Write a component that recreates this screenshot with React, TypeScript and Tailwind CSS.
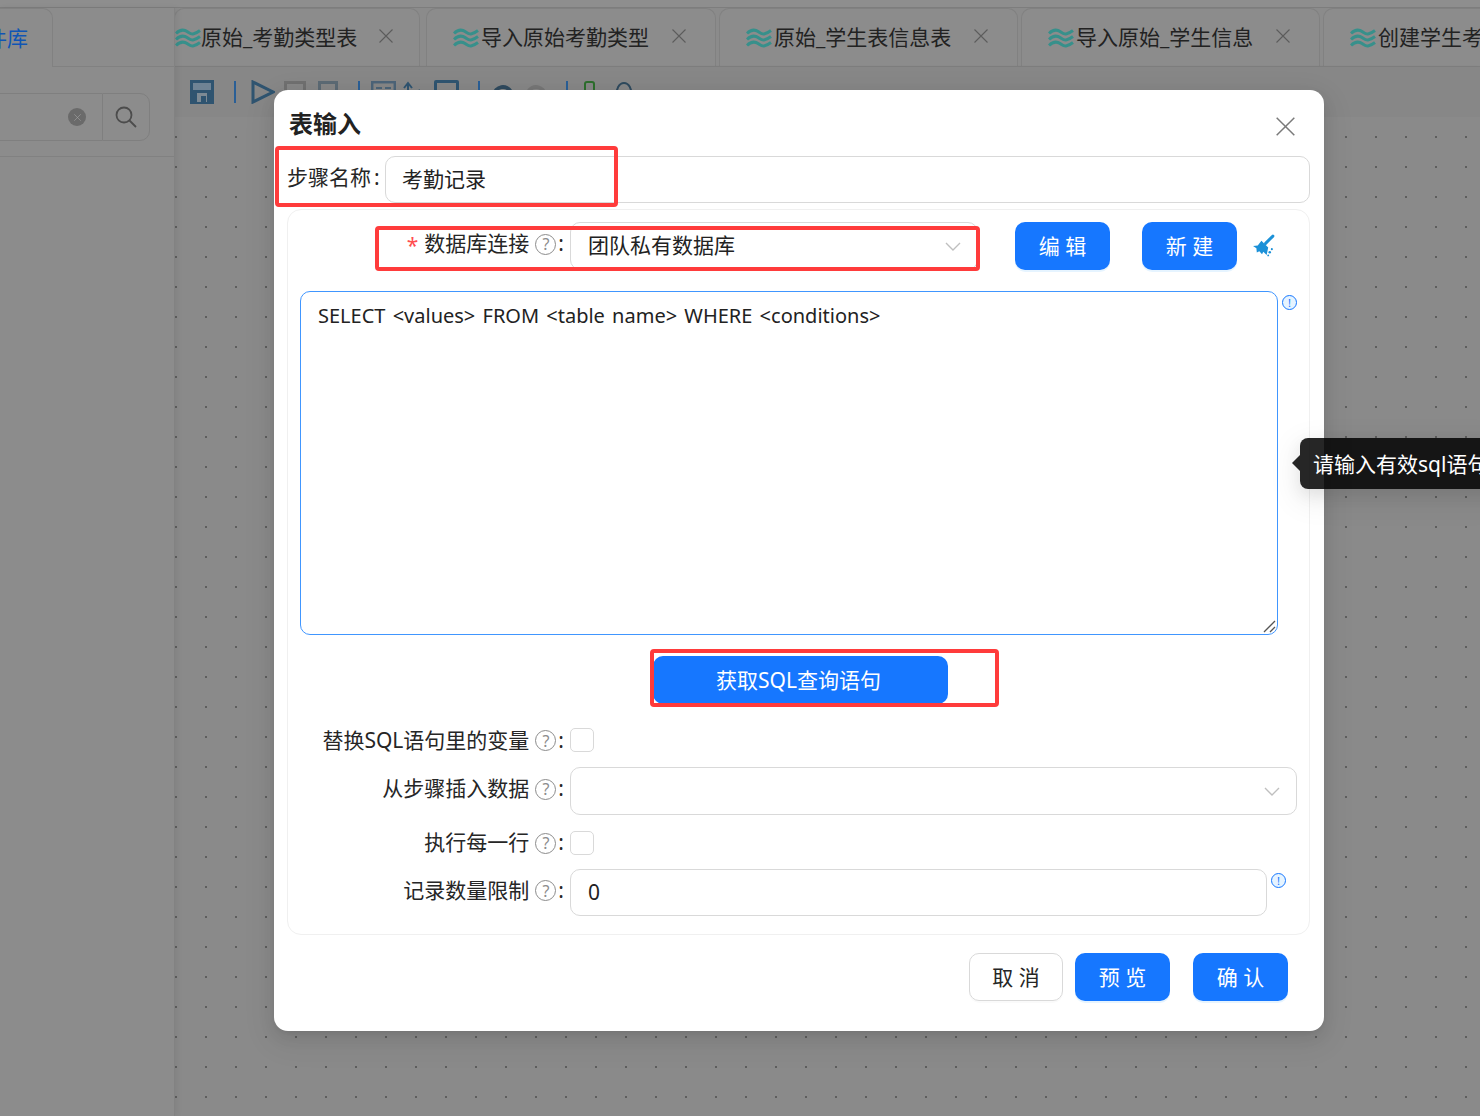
import React from "react";

const Wave = () => (
  <svg width="26" height="20" viewBox="0 0 26 20" fill="none" stroke="#37908b" strokeWidth="3" className="shrink-0">
    <path d="M1 5.5C4 2.5 7 1.5 10 2.5s5 4 8 3.5 5-2 7-3.5" />
    <path d="M1 11.5C4 8.5 7 7.5 10 8.5s5 4 8 3.5 5-2 7-3.5" />
    <path d="M1 17.5C4 14.5 7 13.5 10 14.5s5 4 8 3.5 5-2 7-3.5" />
  </svg>
);

const Cross = ({ size = 14, color = "#5c5c5c" }: { size?: number; color?: string }) => (
  <svg width={size} height={size} viewBox="0 0 14 14" stroke={color} strokeWidth="1.1" fill="none" className="shrink-0">
    <path d="M0.5 0.5 13.5 13.5M13.5 0.5 0.5 13.5" />
  </svg>
);

const Broom = () => (
  <svg width="23" height="23" viewBox="0 0 22 22" fill="#1c91d8" className="ml-[15px] mt-[-2px] shrink-0">
    <path d="M20 2 13 9" stroke="#1c91d8" strokeWidth="2.8" strokeLinecap="round" fill="none" />
    <path d="M9 6.5 15.5 13l-1.5 7-3.2-3-1.2 2.4-2.6-2.8-2.4 1-.4-4L1 11.5l4.5-.4Z" />
    <circle cx="17" cy="17.5" r="1.2" />
    <circle cx="19" cy="14.5" r="1" />
    <circle cx="15.5" cy="20.5" r="0.9" />
  </svg>
);

const Help = () => (
  <span className="ml-[6px] mr-[2px] flex h-[21px] w-[21px] shrink-0 items-center justify-center rounded-full border-[1.5px] border-[#8c8c8c] text-[16px] leading-none text-[#8c8c8c]">?</span>
);

const Info = () => (
  <span className="flex h-[15px] w-[15px] shrink-0 items-center justify-center rounded-full border border-[#1677ff] bg-[#e6f4ff] text-[11px] leading-none text-[#1677ff]">!</span>
);

const Chevron = () => (
  <svg width="16" height="9" viewBox="0 0 16 9" fill="none" stroke="#bfbfbf" strokeWidth="1.4" className="shrink-0">
    <path d="M1 1l7 7 7-7" />
  </svg>
);

const Label = ({ text, required, className = "" }: { text: string; required?: boolean; className?: string }) => (
  <div className={`flex w-[277px] shrink-0 items-center justify-end text-[21px] text-[#262626] ${className}`}>
    {required && <span className="mr-[6px] mt-[2px] text-[21px] leading-none text-[#ff4d4f]">*</span>}
    <span>{text}</span>
    <Help />
    <span className="mr-[1px]">:</span>
  </div>
);

const Primary = ({ children, className = "" }: { children: React.ReactNode; className?: string }) => (
  <div className={`flex h-[48px] w-[95px] shrink-0 items-center justify-center rounded-[10px] bg-[#1677ff] text-[21px] text-white shadow-[0_2px_0_rgba(5,145,255,0.1)] ${className}`}>
    {children}
  </div>
);

const tabs = [
  { text: "原始_考勤类型表", w: "w-[246px]", ml: "ml-[-1px]", pl: "pl-0", tl: "ml-0", gap: "ml-[22px]" },
  { text: "导入原始考勤类型", w: "w-[290px]", ml: "ml-[6px]", pl: "pl-[26px]", tl: "ml-[2px]", gap: "ml-[23px]" },
  { text: "原始_学生表信息表", w: "w-[299px]", ml: "ml-[3px]", pl: "pl-[26px]", tl: "ml-[2px]", gap: "ml-[23px]" },
  { text: "导入原始_学生信息", w: "w-[299px]", ml: "ml-[3px]", pl: "pl-[26px]", tl: "ml-[2px]", gap: "ml-[23px]" },
  { text: "创建学生考勤信息", w: "w-[299px]", ml: "ml-[3px]", pl: "pl-[26px]", tl: "ml-[2px]", gap: "ml-[23px]" },
];

export default function App() {
  return (
    <div className="relative h-[1116px] w-[1480px] overflow-hidden bg-[#8b8b8b] font-['Noto_Sans','Noto_Sans_CJK_SC',sans-serif]">
      {/* background page */}
      <div className="flex h-full w-full flex-col">
        <div className="h-[8px] shrink-0 border-b border-[#7d7d7d] bg-[#8e8e8e]" />
        <div className="flex min-h-0 flex-1">
          {/* left panel */}
          <aside className="z-10 flex w-[175px] shrink-0 flex-col border-r border-[#828282] bg-[#8c8c8c] shadow-[2px_0_6px_rgba(0,0,0,0.06)]">
            <div className="flex h-[59px] shrink-0">
              <div className="flex h-[59px] w-[53px] items-center justify-end rounded-tr-[10px] border-r border-t border-[#818181] pr-[24px] pt-[2px] text-[21px] text-[#0f55b5]">
                <span className="whitespace-nowrap">件库</span>
              </div>
              <div className="flex-1 border-b border-[#818181]" />
            </div>
            <div className="mt-[26px] flex h-[48px] w-[150px] shrink-0">
              <div className="flex flex-1 items-center justify-end border-y border-[#7f7f7f] pr-[16px]">
                <span className="flex h-[18px] w-[18px] items-center justify-center rounded-full bg-[#6a6a6a]">
                  <Cross size={7} color="#a8a8a8" />
                </span>
              </div>
              <div className="flex w-[48px] items-center justify-center rounded-r-[10px] border border-[#7f7f7f]">
                <svg width="24" height="24" viewBox="0 0 24 24" fill="none" stroke="#4c4c4c" strokeWidth="1.8">
                  <circle cx="10" cy="10" r="7.5" />
                  <path d="M15.5 15.5 22 22" />
                </svg>
              </div>
            </div>
            <div className="mt-[15px] border-b border-[#818181]" />
          </aside>

          <main className="flex min-w-0 flex-1 flex-col">
            {/* tabs */}
            <div className="flex h-[59px] shrink-0 overflow-hidden border-b border-[#818181]">
              {tabs.map((t) => (
                <div
                  key={t.text}
                  className={`flex h-[58px] shrink-0 items-center rounded-t-[10px] border border-b-0 border-[#818181] bg-[#8c8c8c] ${t.w} ${t.ml} ${t.pl}`}
                >
                  <Wave />
                  <span className={`${t.tl} whitespace-nowrap text-[21px] text-[#222]`}>{t.text}</span>
                  <span className={`${t.gap} mb-[3px]`}><Cross size={14} /></span>
                </div>
              ))}
            </div>
            {/* toolbar */}
            <div className="flex h-[50px] shrink-0 items-center bg-[#878787] pl-[15px] shadow-[0_1px_3px_rgba(0,0,0,0.15)]">
              <svg width="24" height="24" viewBox="0 0 24 24" className="shrink-0">
                <rect width="24" height="24" fill="#2f5470" />
                <rect x="3" y="3" width="18" height="7" fill="#6f8394" />
                <rect x="7" y="13" width="10" height="9" fill="#7d8a94" />
                <rect x="11" y="16" width="5" height="6" fill="#2f5470" />
              </svg>
              <span className="ml-[20px] h-[22px] w-[2px] bg-[#2a5f96]" />
              <svg width="24" height="24" viewBox="0 0 24 24" fill="none" stroke="#2f5470" strokeWidth="3" className="ml-[15px] shrink-0">
                <path d="M2 2 22 12 2 22Z" />
              </svg>
              <span className="ml-[9px] h-[22px] w-[22px] border-[3px] border-[#707070]" />
              <span className="ml-[12px] h-[22px] w-[20px] border-[3px] border-[#5c6a74]" />
              <span className="ml-[20px] h-[22px] w-[2px] bg-[#2a5f96]" />
              <svg width="25" height="22" viewBox="0 0 25 22" fill="none" stroke="#4c6478" strokeWidth="2.5" className="ml-[11px] shrink-0">
                <rect x="1.2" y="1.2" width="22.6" height="20" />
                <path d="M5 7h6M14 7h6" strokeWidth="2" />
              </svg>
              <svg width="18" height="22" viewBox="0 0 18 22" fill="none" stroke="#2f5470" strokeWidth="2" className="ml-[7px] shrink-0">
                <path d="M5 22V3M1 7l4-5 4 5M13 22v-8M12 12l5-3" />
              </svg>
              <span className="ml-[13px] h-[24px] w-[25px] rounded-[2px] border-[3px] border-[#2f5470]" />
              <span className="ml-[19px] h-[22px] w-[2px] bg-[#2a5f96]" />
              <svg width="22" height="22" viewBox="0 0 22 22" fill="none" stroke="#2f4a5e" strokeWidth="4" className="ml-[11px] shrink-0">
                <path d="M3 14a9 9 0 0 1 17-3" />
              </svg>
              <svg width="22" height="22" viewBox="0 0 22 22" fill="none" stroke="#767676" strokeWidth="4" className="ml-[12px] shrink-0">
                <path d="M20 14a9 9 0 0 0-17-3" />
              </svg>
              <span className="ml-[19px] h-[22px] w-[2px] bg-[#2a5f96]" />
              <span className="ml-[16px] h-[22px] w-[11px] rounded-t-[3px] border-[2px] border-[#2d6e2d]" />
              <svg width="22" height="22" viewBox="0 0 22 22" fill="none" stroke="#2f4a5e" strokeWidth="2" className="ml-[18px] shrink-0">
                <path d="M3 16C3 8 6 2 11 2s8 6 8 14" />
              </svg>
            </div>
            {/* canvas */}
            <div className="flex-1 bg-[#8a8a8a] bg-[radial-gradient(circle,#5e5e5e_1px,transparent_1px)] bg-[length:30px_30px] bg-[position:16px_5px]" />
          </main>
        </div>
      </div>

      {/* modal */}
      <div className="absolute left-[274px] top-[90px] z-20 flex h-[941px] w-[1050px] flex-col rounded-[14px] bg-white pl-[13px] pr-[14px] shadow-[0_6px_16px_rgba(0,0,0,0.08),0_3px_6px_-4px_rgba(0,0,0,0.12),0_9px_28px_8px_rgba(0,0,0,0.05)]">
        <div className="flex h-[66px] shrink-0 items-center justify-between pl-[2px] pr-[15px]">
          <span className="mt-[2px] text-[24px] font-bold leading-none text-[#222]">表输入</span>
          <span className="mt-[6px]"><Cross size={19} color="#7a7a7a" /></span>
        </div>

        <div className="flex h-[47px] shrink-0 items-center">
          <span className="flex w-[98px] shrink-0 pb-[4px] text-[21px] text-[#262626]">步骤名称<span className="ml-[3px]">:</span></span>
          <div className="flex h-full flex-1 items-center rounded-[10px] border border-[#d9d9d9] pl-[16px] text-[21px] text-[#222]">考勤记录</div>
        </div>

        <section className="mt-[6px] flex h-[726px] shrink-0 flex-col rounded-[14px] border border-[#f0f0f0] pl-[12px] pt-[12px]">
          <div className="-ml-[12px] flex h-[48px] shrink-0 items-center">
            <Label text="数据库连接" required className="pb-[4px]" />
            <div className="ml-[5px] flex h-full w-[408px] items-center justify-between rounded-[10px] border border-[#d9d9d9] pl-[17px] pr-[16px] text-[21px] text-[#222]">
              <span>团队私有数据库</span>
              <Chevron />
            </div>
            <Primary className="ml-[37px] pt-[1px]">编 辑</Primary>
            <Primary className="ml-[32px] pt-[1px]">新 建</Primary>
            <Broom />
          </div>

          <div className="mt-[21px] flex h-[344px] shrink-0 items-start">
            <div className="relative h-full w-[978px] rounded-[10px] border border-[#4096ff] px-[17px] py-[9px] text-[20px] leading-[30px] text-[#222] [word-spacing:2px]">
              SELECT &lt;values&gt; FROM &lt;table name&gt; WHERE &lt;conditions&gt;
              <svg width="13" height="13" viewBox="0 0 13 13" stroke="#555" strokeWidth="1.3" className="absolute bottom-[1px] right-[1px]">
                <path d="M1 12 12 1M7 12l5-5" />
              </svg>
            </div>
            <span className="ml-[4px] mt-[4px]"><Info /></span>
          </div>

          <div className="ml-[353px] mt-[21px] flex h-[48px] w-[295px] shrink-0 items-center justify-center rounded-[10px] bg-[#1677ff] pr-[4px] pt-[2px] text-[21px] text-white">
            获取SQL查询语句
          </div>

          <div className="-ml-[12px] mt-[24px] flex h-[24px] shrink-0 items-center">
            <Label text="替换SQL语句里的变量" className="pt-[1px]" />
            <span className="ml-[5px] h-[24px] w-[24px] rounded-[5px] border border-[#d9d9d9]" />
          </div>

          <div className="-ml-[12px] mt-[15px] flex h-[48px] shrink-0 items-center">
            <Label text="从步骤插入数据" className="pb-[4px]" />
            <div className="ml-[5px] flex h-full w-[727px] items-center justify-end rounded-[10px] border border-[#d9d9d9] pr-[16px]">
              <Chevron />
            </div>
          </div>

          <div className="-ml-[12px] mt-[16px] flex h-[24px] shrink-0 items-center">
            <Label text="执行每一行" />
            <span className="ml-[5px] h-[24px] w-[24px] rounded-[5px] border border-[#d9d9d9]" />
          </div>

          <div className="-ml-[12px] mt-[14px] flex h-[47px] shrink-0 items-start">
            <Label text="记录数量限制" className="h-full pb-[4px]" />
            <div className="ml-[5px] flex h-full w-[697px] items-center rounded-[10px] border border-[#d9d9d9] pl-[17px] text-[21px] text-[#222]">0</div>
            <span className="ml-[4px] mt-[4px]"><Info /></span>
          </div>
        </section>

        <div className="mt-[18px] flex shrink-0 justify-end pr-[22px]">
          <div className="flex h-[48px] w-[94px] items-center justify-center rounded-[10px] border border-[#d9d9d9] pt-[2px] text-[21px] text-[#262626] shadow-[0_2px_0_rgba(0,0,0,0.02)]">取 消</div>
          <Primary className="ml-[12px] pt-[2px]">预 览</Primary>
          <Primary className="ml-[23px] pt-[2px]">确 认</Primary>
        </div>
      </div>

      {/* annotation boxes */}
      <div className="absolute left-[275px] top-[146px] z-30 h-[61px] w-[343px] rounded-[4px] border-[4px] border-[#ff3b3b]" />
      <div className="absolute left-[375px] top-[226px] z-30 h-[45px] w-[605px] rounded-[4px] border-[4px] border-[#ff3b3b]" />
      <div className="absolute left-[650px] top-[649px] z-30 h-[58px] w-[349px] rounded-[4px] border-[4px] border-[#ff3b3b]" />

      {/* tooltip */}
      <div className="absolute left-[1300px] top-[438px] z-30 flex h-[51px] w-[200px] items-center rounded-l-[8px] bg-black/85 pl-[13px] pt-[2px] text-[21px] whitespace-nowrap text-white shadow-[0_6px_16px_rgba(0,0,0,0.08),0_9px_28px_8px_rgba(0,0,0,0.05)]">
        <span className="absolute left-[-8px] top-[17px] h-0 w-0 border-y-[8px] border-r-[8px] border-y-transparent border-r-black/85" />
        请输入有效sql语句
      </div>
    </div>
  );
}
